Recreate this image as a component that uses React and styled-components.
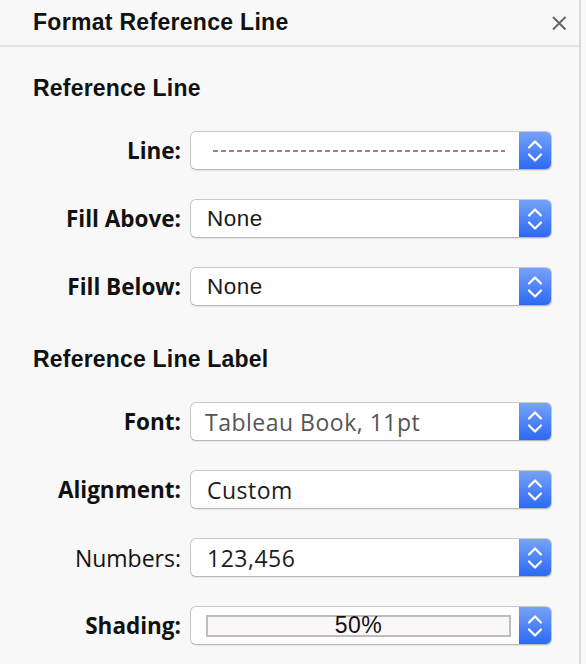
import React from 'react';
import styled, { createGlobalStyle } from 'styled-components';

const GlobalStyle = createGlobalStyle`
  html, body {
    margin: 0;
    padding: 0;
    background: #f8f8f8;
  }
`;

const Panel = styled.div`
  width: 581px;
  height: 664px;
  border-right: 2px solid #d9d9d9;
  background: #f8f8f8;
  font-family: "Liberation Sans", Arial, sans-serif;
  color: #111;
  box-sizing: border-box;
`;

const Header = styled.div`
  height: 47px;
  border-bottom: 2px solid #e3e3e3;
  display: flex;
  align-items: center;
  justify-content: space-between;
  padding: 0 12px 0 33px;
  box-sizing: border-box;
`;

const Title = styled.h1`
  margin: 0;
  font-size: 23px;
  font-weight: 700;
  letter-spacing: 0.3px;
  color: #111;
`;

const Close = styled.button`
  border: none;
  background: none;
  padding: 0;
  width: 16px;
  height: 16px;
  display: flex;
  align-items: center;
  justify-content: center;
  cursor: pointer;
`;

const Body = styled.div`
  padding-top: 28px;
`;

const SectionTitle = styled.h2`
  margin: 0 0 ${(p) => p.$after}px 33px;
  font-size: 23px;
  line-height: 26px;
  font-weight: 700;
  letter-spacing: 0.2px;
  color: #111;
`;

const Rows = styled.div`
  display: flex;
  flex-direction: column;
  gap: 29px;
  margin-bottom: ${(p) => p.$after}px;
`;

const Row = styled.div`
  display: grid;
  grid-template-columns: 181px 362px;
  column-gap: 9px;
  align-items: center;
`;

const Label = styled.label`
  text-align: right;
  font-family: "Open Sans", "Liberation Sans", sans-serif;
  font-size: ${(p) => (p.$plain ? 23 : 22.5)}px;
  font-weight: ${(p) => (p.$plain ? 400 : 700)};
  color: #111;
`;

const Select = styled.div`
  height: 39px;
  display: flex;
  background: #fff;
  border: 1px solid #c9c9c9;
  border-bottom-color: #b9b9b9;
  border-radius: 6px;
  box-shadow: 0 1px 1px rgba(0, 0, 0, 0.08);
  box-sizing: border-box;
  overflow: hidden;
`;

const Value = styled.div`
  flex: 1;
  display: flex;
  align-items: center;
  padding-left: ${(p) => p.$pad ?? 16}px;
  padding-right: ${(p) => p.$padRight ?? 14}px;
  font-family: ${(p) =>
    p.$book ? '"Open Sans", "Liberation Sans", sans-serif' : '"Liberation Sans", Arial, sans-serif'};
  font-size: ${(p) => (p.$book ? 23 : 22.5)}px;
  letter-spacing: 0.5px;
  color: ${(p) => p.$color || '#1c1c1c'};
  white-space: nowrap;
`;

const Dashes = styled.div`
  flex: 1;
  height: 2px;
  margin-left: 6px;
  background: repeating-linear-gradient(
    to right,
    #ac6f9e 0 5px,
    transparent 5px 8px
  );
`;

const Swatch = styled.div`
  flex: 1;
  height: 22px;
  border: 2px solid #bdbdbd;
  background: #fbf6f9;
  box-sizing: border-box;
  display: flex;
  align-items: center;
  justify-content: center;
  font-family: "Liberation Sans", Arial, sans-serif;
  font-size: 23px;
  letter-spacing: 0.5px;
  color: #111;
  line-height: 1;
`;

const Stepper = styled.div`
  width: 32px;
  flex-shrink: 0;
  background: linear-gradient(to bottom, #76a2f8, #2c69f4);
  display: flex;
  align-items: center;
  justify-content: center;
`;

const CloseIcon = () => (
  <svg width="16" height="16" viewBox="0 0 16 16">
    <path d="M2 2L14.5 14.5M14.5 2L2 14.5" stroke="#666" strokeWidth="2" />
  </svg>
);

const Chevrons = () => (
  <svg width="18" height="24" viewBox="0 0 18 24">
    <path
      d="M3 8.5L9 2.5L15 8.5M3 15.5L9 21.5L15 15.5"
      fill="none"
      stroke="#fff"
      strokeWidth="2.2"
      strokeLinecap="round"
      strokeLinejoin="round"
    />
  </svg>
);

const Dropdown = ({ children }) => (
  <Select>
    {children}
    <Stepper>
      <Chevrons />
    </Stepper>
  </Select>
);

const lineRows = [
  { label: 'Fill Above:', value: 'None' },
  { label: 'Fill Below:', value: 'None' },
];

const App = () => (
  <>
    <GlobalStyle />
    <Panel>
      <Header>
        <Title>Format Reference Line</Title>
        <Close aria-label="Close">
          <CloseIcon />
        </Close>
      </Header>
      <Body>
        <SectionTitle $after={30}>Reference Line</SectionTitle>
        <Rows $after={40}>
          <Row>
            <Label>Line:</Label>
            <Dropdown>
              <Value $pad={16}>
                <Dashes />
              </Value>
            </Dropdown>
          </Row>
          {lineRows.map((r) => (
            <Row key={r.label}>
              <Label>{r.label}</Label>
              <Dropdown>
                <Value>{r.value}</Value>
              </Dropdown>
            </Row>
          ))}
        </Rows>
        <SectionTitle $after={30}>Reference Line Label</SectionTitle>
        <Rows $after={0}>
          <Row>
            <Label>Font:</Label>
            <Dropdown>
              <Value $book $pad={14} $color="#555">
                Tableau Book, 11pt
              </Value>
            </Dropdown>
          </Row>
          <Row>
            <Label>Alignment:</Label>
            <Dropdown>
              <Value $book>Custom</Value>
            </Dropdown>
          </Row>
          <Row>
            <Label $plain>Numbers:</Label>
            <Dropdown>
              <Value $book>123,456</Value>
            </Dropdown>
          </Row>
          <Row>
            <Label>Shading:</Label>
            <Dropdown>
              <Value $pad={15} $padRight={8}>
                <Swatch>50%</Swatch>
              </Value>
            </Dropdown>
          </Row>
        </Rows>
      </Body>
    </Panel>
  </>
);

export default App;
